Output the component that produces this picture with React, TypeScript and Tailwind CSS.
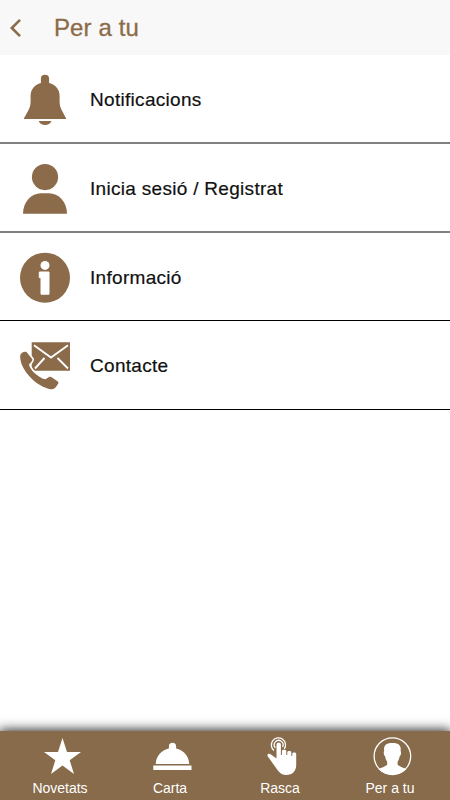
import React from "react";

interface IconProps {
  className?: string;
}

interface MenuItem {
  label: string;
  icon: React.ReactNode;
  border: string;
}

interface TabItem {
  label: string;
  icon: React.ReactNode;
}

const BellIcon = ({ className }: IconProps) => (
  <svg viewBox="0 0 50 50" className={className} fill="currentColor">
    <path d="M4 43.300L8.300 35.500C9.900 32.500 10.600 30 10.600 26V20.500C10.800 14 14.800 9.500 20.900 7.900V3.800a4.100 4.100 0 0 1 8.200 0V7.900C35.500 9.500 39.400 14 39.600 20.500V26C39.600 30 40.300 32.500 41.900 35.500L46 43.300V43.900H4Z" />
    <path d="M18.700 45.900H31.500C30.500 48.500 28 49.900 25.100 49.900S19.700 48.500 18.700 45.900Z" />
  </svg>
);

const UserIcon = ({ className }: IconProps) => (
  <svg viewBox="0 0 50 50" className={className} fill="currentColor">
    <circle cx="25" cy="13.100" r="13.100" />
    <path d="M3 49.800C3 37.500 11.500 29.200 21 29.200H29C38.500 29.200 47 37.500 47 49.800Z" />
  </svg>
);

const InfoIcon = ({ className }: IconProps) => (
  <svg viewBox="0 0 50 50" className={className}>
    <circle cx="25" cy="24.700" r="25" fill="currentColor" />
    <circle cx="25" cy="12.400" r="4.500" fill="white" />
    <path
      d="M19.300 19H29V41.200H21V24.700H19.300Z"
      fill="white"
      stroke="white"
      strokeWidth="1"
      strokeLinejoin="round"
    />
  </svg>
);

const ContactIcon = ({ className }: IconProps) => (
  <svg viewBox="0 0 50 50" className={className}>
    <path d="M11.700 1.200H50V29.700H11.700Z" fill="currentColor" />
    <path
      d="M14 4.300L31 16.500L48 4.300M24.500 17L15 27.500M37.500 17L48 27.500"
      fill="none"
      stroke="white"
      strokeWidth="1.900"
    />
    <path
      d="M.5 13.500C1.500 11.700 4.500 10 6.500 11L12.200 18C12.900 19.500 11.500 20.800 9 23.500C9.500 28.500 19 37.500 25.500 38.300L29 36C30 35.600 31 35.800 32 36.500L37.500 40.200C39 41.400 38.500 42.300 37.500 43.800C36 46.600 34 48.500 31 48.300C17 46 1.500 30.500 .2 17C.1 15.600 .1 14.500 .5 13.500Z"
      fill="currentColor"
      stroke="white"
      strokeWidth="3.400"
      strokeLinejoin="round"
      paintOrder="stroke"
    />
  </svg>
);

const StarIcon = ({ className }: IconProps) => (
  <svg viewBox="0 0 40 40" className={className} fill="currentColor">
    <path d="M20.500 2L25 15.900H39L27.700 24.300L32 38L20.500 29.600L9 38L13.300 24.300L2 15.900H16Z" />
  </svg>
);

const ClocheIcon = ({ className }: IconProps) => (
  <svg viewBox="0 0 40 40" className={className} fill="currentColor">
    <path d="M3.700 28C4.200 20 9.500 14.300 16.900 12.600V10.300a3.500 3.500 0 0 1 7.200 0V12.600C31.500 14.300 36.800 20 37.300 28Z" />
    <path d="M1.300 29.500H39.500V34H1.300Z" />
  </svg>
);

const TouchIcon = ({ className }: IconProps) => (
  <svg viewBox="0 0 40 40" className={className} fill="currentColor">
    <g transform="translate(4 0)">
      <path
        d="M8 14.500A7.100 7.100 0 1 1 18.300 13M9.400 11.800A4.400 4.400 0 1 1 16.500 11"
        fill="none"
        stroke="currentColor"
        strokeWidth="1.300"
      />
      <path d="M10.500 22.500V8.500C10.500 5.700 14.900 5.700 14.900 8.500V19H15.900V14.800C15.900 13.300 20.300 13.300 20.300 14.800V19H21.300V16C21.300 14.500 25.300 14.500 25.300 16V20H26.300V17.700C26.300 16.200 30.200 16.200 30.200 17.700V29C30.200 35 26.500 39 20.500 39C16.500 39 13.500 37 11.500 34L1.700 20.300C.7 18 3 17.100 5 18.500Z" />
    </g>
  </svg>
);

const ProfileIcon = ({ className }: IconProps) => (
  <svg viewBox="0 0 40 40" className={className}>
    <circle cx="20.400" cy="20.200" r="18.300" fill="none" stroke="currentColor" strokeWidth="1.300" />
    <path
      d="M6.500 33.200C9.500 31.300 14 30.500 15.200 28.500V25.800C14 24.300 13.500 22.500 13.200 20.600C11.700 19.500 11.300 16 12.200 15C11.300 8.800 14.500 6.900 20.400 6.900S29.500 8.800 28.600 15C29.500 16 29.100 19.500 27.600 20.600C27.300 22.500 26.800 24.300 25.600 25.800V28.500C26.800 30.500 31.300 31.300 34.300 33.200C31 36.700 26 38.600 20.400 38.600S10 36.700 6.500 33.200Z"
      fill="currentColor"
    />
  </svg>
);

const menuItems: MenuItem[] = [
  {
    label: "Notificacions",
    icon: <BellIcon className="size-[50px] overflow-visible" />,
    border: "h-[89px] border-b-2 border-[#808080]",
  },
  {
    label: "Inicia sesió / Registrat",
    icon: <UserIcon className="size-[50px] overflow-visible" />,
    border: "h-[89px] border-b-2 border-[#808080]",
  },
  {
    label: "Informació",
    icon: <InfoIcon className="size-[50px] overflow-visible" />,
    border: "h-[88px] border-b border-black",
  },
  {
    label: "Contacte",
    icon: <ContactIcon className="size-[50px] overflow-visible" />,
    border: "h-[89px] border-b border-black",
  },
];

const tabs: TabItem[] = [
  { label: "Novetats", icon: <StarIcon className="size-10" /> },
  { label: "Carta", icon: <ClocheIcon className="size-10" /> },
  { label: "Rasca", icon: <TouchIcon className="size-10" /> },
  { label: "Per a tu", icon: <ProfileIcon className="size-10" /> },
];

const Header = () => (
  <header className="flex h-[55px] shrink-0 items-center bg-[#f8f8f8] text-[#8b6b49]">
    <button className="ml-[9px] w-[45px]" aria-label="Enrere">
      <svg viewBox="0 0 14 20" className="h-5 w-3.5" fill="none" stroke="currentColor" strokeWidth="2.600">
        <path d="M11 1.800L2.800 10L11 18.200" />
      </svg>
    </button>
    <h1 className="text-[24px] leading-[30px] tracking-[0.1px] [-webkit-text-stroke:0.3px_currentColor]">
      Per a tu
    </h1>
  </header>
);

const App = () => {
  return (
    <div className="flex h-screen w-full flex-col overflow-hidden bg-white font-['Liberation_Sans',Arial,sans-serif]">
      <Header />

      <main className="flex-1">
        {menuItems.map((item) => (
          <div key={item.label} className={`flex items-center pl-5 ${item.border}`}>
            <span className="mt-0.5 text-[#8b6b49]">{item.icon}</span>
            <span className="ml-5 mt-0.5 text-[19px] leading-6 tracking-[0.3px] text-[#111] [-webkit-text-stroke:0.2px_currentColor]">
              {item.label}
            </span>
          </div>
        ))}
      </main>

      <nav className="flex h-[69px] shrink-0 justify-center bg-[#876b4a] px-[5px] text-white shadow-[0_0_11px_1px_#222]">
        {tabs.map((tab) => (
          <div key={tab.label} className="flex w-[110px] flex-col items-center pt-[5px] pl-1">
            {tab.icon}
            <span className="-ml-1 mt-[3px] text-[14px] leading-[18px]">
              {tab.label}
            </span>
          </div>
        ))}
      </nav>
    </div>
  );
};

export default App;
